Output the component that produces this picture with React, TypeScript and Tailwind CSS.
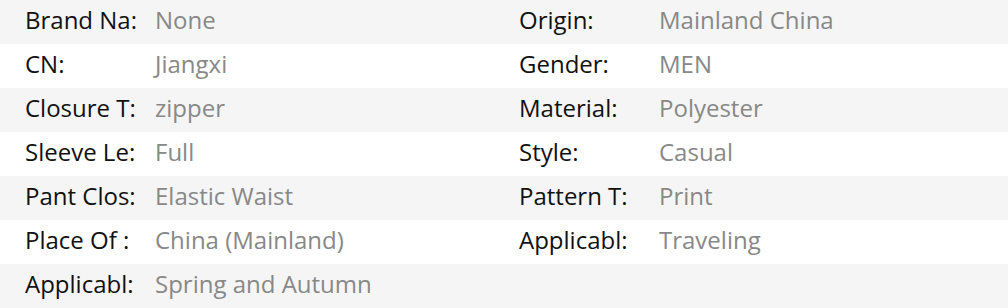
const rows: [string, string, string?, string?][] = [
  ["Brand Na:", "None", "Origin:", "Mainland China"],
  ["CN:", "Jiangxi", "Gender:", "MEN"],
  ["Closure T:", "zipper", "Material:", "Polyester"],
  ["Sleeve Le:", "Full", "Style:", "Casual"],
  ["Pant Clos:", "Elastic Waist", "Pattern T:", "Print"],
  ["Place Of :", "China (Mainland)", "Applicabl:", "Traveling"],
  ["Applicabl:", "Spring and Autumn"],
];

function Cell({ label, value, labelW }: { label?: string; value?: string; labelW: string }) {
  if (!label) return null;
  return (
    <div className="flex items-center pl-[25px]">
      <span className={`${labelW} shrink-0 whitespace-nowrap text-[#111]`}>{label}</span>
      <span className="whitespace-nowrap text-[#888]">{value}</span>
    </div>
  );
}

export default function App() {
  return (
    <div
      className="w-[1008px] h-[308px] bg-white text-[24px] leading-none"
      style={{ fontFamily: '"Open Sans", "Noto Sans", sans-serif' }}
    >
      {rows.map((r, i) => (
        <div
          key={i}
          className={`flex h-[44px] items-center pb-[4px] ${i % 2 === 0 ? "bg-[#f5f5f5]" : "bg-white"}`}
        >
          <div className="w-[494px] shrink-0">
            <Cell label={r[0]} value={r[1]} labelW="w-[130px]" />
          </div>
          <div className="flex-1">
            <Cell label={r[2]} value={r[3]} labelW="w-[140px]" />
          </div>
        </div>
      ))}
    </div>
  );
}
